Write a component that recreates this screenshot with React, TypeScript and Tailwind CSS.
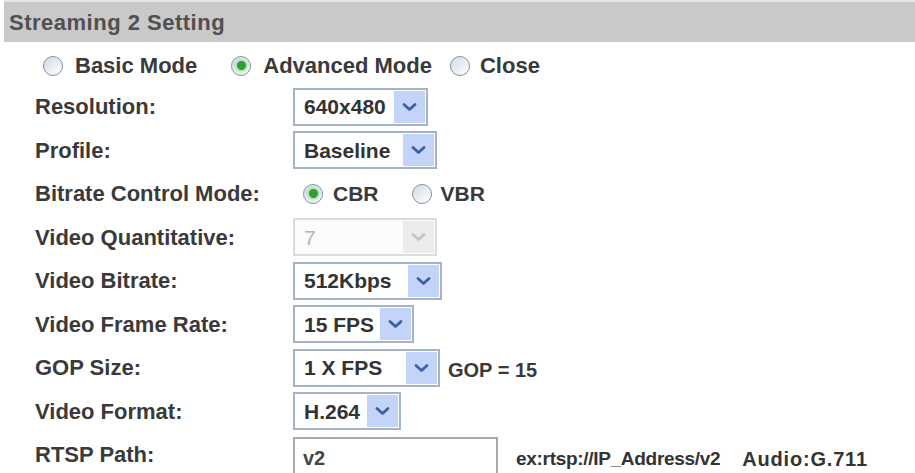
import React from 'react';

const font = "font-['Liberation_Sans',Arial,Helvetica,sans-serif]";

const Chevron: React.FC<{ disabled?: boolean }> = ({ disabled }) => (
  <svg className="w-[15px] h-[10px]" viewBox="0 0 15 10" fill="none">
    <path
      d="M2 2.5 L7.5 7.5 L13 2.5"
      stroke={disabled ? '#c4c4c4' : '#3d5fa8'}
      strokeWidth={2.8}
      strokeLinecap="round"
      strokeLinejoin="round"
    />
  </svg>
);

interface SelectProps {
  value: string;
  width: string;
  disabled?: boolean;
}

const Select: React.FC<SelectProps> = ({ value, width, disabled }) => (
  <div
    className={`${width} h-[38px] flex items-center justify-between border-2 p-[1px] ${
      disabled ? 'border-[#dcdcdc] bg-[#fbfbfb]' : 'border-[#a3b3c8] bg-white'
    }`}
  >
    <span
      className={`pl-[8px] text-[21px] leading-none ${disabled ? 'font-normal text-[#b5b5b5]' : 'font-bold text-[#333]'}`}
    >
      {value}
    </span>
    <div
      className={`w-[31px] h-full flex items-center justify-center ${
        disabled ? 'bg-[#ececec]' : 'bg-[#c3d4f8]'
      }`}
    >
      <Chevron disabled={disabled} />
    </div>
  </div>
);

const Radio: React.FC<{ checked?: boolean }> = ({ checked }) => (
  <span className="w-[20px] h-[20px] rounded-full border-[1.5px] border-[#7e90ab] bg-gradient-to-br from-[#d5dbe3] to-white flex items-center justify-center shrink-0">
    {checked && <span className="w-[9px] h-[9px] rounded-full bg-[#2f9e35] shadow-[0_0_3px_2px_#a8e0a8]" />}
  </span>
);

const Row: React.FC<{ label: string; children: React.ReactNode }> = ({ label, children }) => (
  <div className="h-[43.5px] flex items-center pl-[35px]">
    <div className="w-[258px] text-[22px] font-bold text-[#3a3a3a]">{label}</div>
    <div className="flex items-center">{children}</div>
  </div>
);

export default function App() {
  return (
    <div className={`${font} w-[915px] h-[473px] bg-white overflow-hidden`}>
      <div className="ml-[4px] h-[42px] bg-[#c9c9c9] border-t-2 border-[#e4e4e4] flex items-center pl-[5px]">
        <span className="text-[22px] font-bold tracking-[0.5px] text-[#505050]">Streaming 2 Setting</span>
      </div>

      <div className="h-[43px] flex items-center pl-[43px] pt-[4px] text-[22px] font-bold text-[#3a3a3a]">
        <Radio />
        <span className="ml-[12px]">Basic Mode</span>
        <span className="ml-[34px]"><Radio checked /></span>
        <span className="ml-[12px]">Advanced Mode</span>
        <span className="ml-[18px]"><Radio /></span>
        <span className="ml-[10px]">Close</span>
      </div>

      <Row label="Resolution:">
        <Select value="640x480" width="w-[135px]" />
      </Row>
      <Row label="Profile:">
        <Select value="Baseline" width="w-[144px]" />
      </Row>
      <Row label="Bitrate Control Mode:">
        <div className="flex items-center pl-[10px] text-[21px] font-bold text-[#3a3a3a]">
          <Radio checked />
          <span className="ml-[10px]">CBR</span>
          <span className="ml-[33px]"><Radio /></span>
          <span className="ml-[9px]">VBR</span>
        </div>
      </Row>
      <Row label="Video Quantitative:">
        <Select value="7" width="w-[144px]" disabled />
      </Row>
      <Row label="Video Bitrate:">
        <Select value="512Kbps" width="w-[149px]" />
      </Row>
      <Row label="Video Frame Rate:">
        <Select value="15 FPS" width="w-[121px]" />
      </Row>
      <Row label="GOP Size:">
        <Select value="1 X FPS" width="w-[147px]" />
        <span className="ml-[8px] mt-[4px] text-[20px] font-bold text-[#3a3a3a]">GOP = 15</span>
      </Row>
      <Row label="Video Format:">
        <Select value="H.264" width="w-[108px]" />
      </Row>
      <Row label="RTSP Path:">
        <div className="w-[205px] h-[44px] mt-[8px] border-2 border-[#a9a9a9] flex items-start pt-[4px] pl-[8px] text-[20px] font-bold text-[#444]">
          v2
        </div>
        <span className="ml-[18px] mt-[8px] text-[19px] font-bold tracking-[-0.3px] text-[#333] whitespace-nowrap">
          ex:rtsp://IP_Address/v2
        </span>
        <span className="ml-[22px] mt-[8px] text-[20px] font-bold tracking-[0.8px] text-[#333] whitespace-nowrap">
          Audio:G.711
        </span>
      </Row>
    </div>
  );
}
